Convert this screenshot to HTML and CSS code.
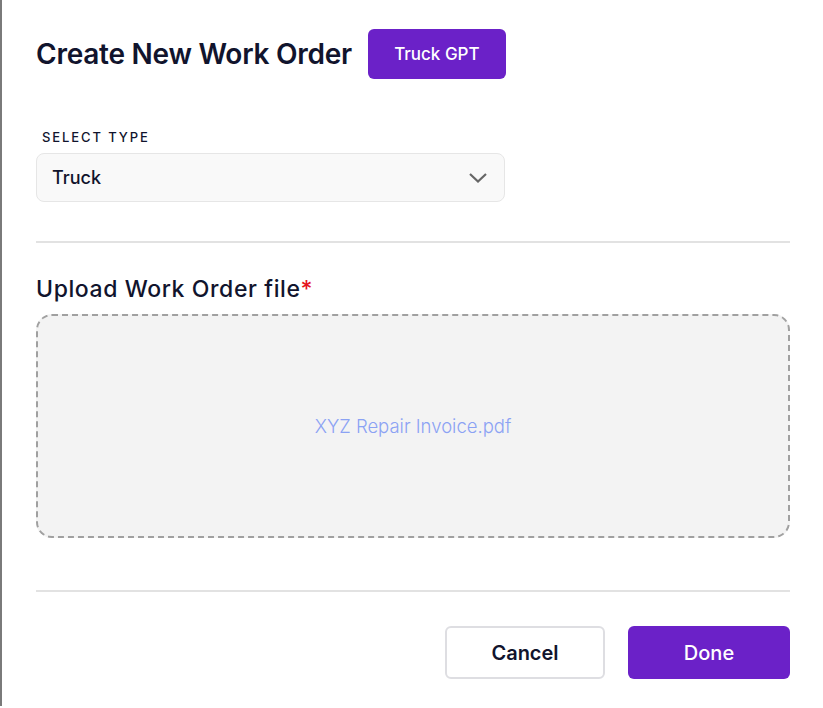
FILE: index.html
```html
<!DOCTYPE html>
<html>
<head>
<meta charset="utf-8">
<link rel="stylesheet" href="styles.css">
</head>
<body>
<div class="modal">
  <div class="header">
    <h1 class="title">Create New Work Order</h1>
    <button class="btn btn-primary btn-gpt">Truck GPT</button>
  </div>
  <div class="field">
    <div class="field-label">SELECT TYPE</div>
    <div class="select">
      <span class="select-value">Truck</span>
      <svg class="chevron" width="18" height="10" viewBox="0 0 18 10"><path d="M1 1 L9 8.5 L17 1" fill="none" stroke="#666" stroke-width="2.2"/></svg>
    </div>
  </div>
  <hr class="divider divider-top">
  <div class="upload-label">Upload Work Order file<span class="req">*</span></div>
  <div class="dropzone">
    <span class="file-name">XYZ Repair Invoice.pdf</span>
  </div>
  <hr class="divider divider-bottom">
  <div class="actions">
    <button class="btn btn-outline">Cancel</button>
    <button class="btn btn-primary btn-done">Done</button>
  </div>
</div>
</body>
</html>
```

FILE: styles.css
```css
html, body {
  margin: 0;
  padding: 0;
  background: #fff;
}
body {
  font-family: Inter, "Noto Sans", sans-serif;
  color: #11142d;
  width: 823px;
  height: 708px;
  overflow: hidden;
}
.modal {
  box-sizing: border-box;
  height: 706px;
  border-left: 2px solid #7a7a7a;
  padding: 29px 33px 0 34px;
  width: 823px;
}
.header {
  display: flex;
  align-items: center;
  gap: 16px;
  height: 50px;
}
.title {
  margin: 0;
  font-size: 28px;
  font-weight: 600;
  letter-spacing: -0.25px;
  color: #11142d;
}
.btn {
  font-family: Inter, "Noto Sans", sans-serif;
  border-radius: 6px;
  cursor: pointer;
  box-sizing: border-box;
}
.btn-primary {
  background: #6b21c8;
  color: #fff;
  border: none;
}
.btn-gpt {
  width: 138px;
  height: 50px;
  font-size: 17px;
  font-weight: 500;
}
.field {
  margin-top: 50px;
}
.field-label {
  font-size: 13px;
  font-weight: 500;
  letter-spacing: 1.9px;
  padding-left: 6px;
  line-height: 16px;
  color: #11142d;
}
.select {
  margin-top: 8px;
  width: 469px;
  height: 49px;
  box-sizing: border-box;
  border: 1px solid #e6e6e6;
  border-radius: 8px;
  background: #f9f9f9;
  display: flex;
  align-items: center;
  justify-content: space-between;
  padding: 0 17px 0 15px;
}
.select-value {
  font-size: 18px;
  font-weight: 500;
  color: #11142d;
}
.chevron {
  display: block;
}
.divider {
  border: none;
  height: 2px;
  background: #e2e2e2;
  margin: 0;
  width: 754px;
}
.divider-top {
  margin-top: 39px;
}
.upload-label {
  margin-top: 34px;
  font-size: 23px;
  font-weight: 500;
  letter-spacing: 0.6px;
  line-height: 24px;
  color: #11142d;
}
.req {
  color: #e5131c;
}
.dropzone {
  margin-top: 13px;
  width: 754px;
  height: 224px;
  box-sizing: border-box;
  border: 2px dashed #a0a0a0;
  border-radius: 16px;
  background: #f3f3f3;
  display: flex;
  align-items: center;
  justify-content: center;
}
.file-name {
  font-size: 18.5px;
  font-weight: 300;
  color: #8ba2f3;
}
.divider-bottom {
  margin-top: 52px;
}
.actions {
  margin-top: 34px;
  display: flex;
  justify-content: flex-end;
  gap: 23px;
  width: 754px;
}
.btn-outline {
  width: 160px;
  height: 53px;
  background: #fff;
  border: 2px solid #dedee2;
  color: #11142d;
  font-size: 20px;
  font-weight: 600;
}
.btn-done {
  width: 162px;
  height: 53px;
  font-size: 20px;
  font-weight: 500;
}
```
